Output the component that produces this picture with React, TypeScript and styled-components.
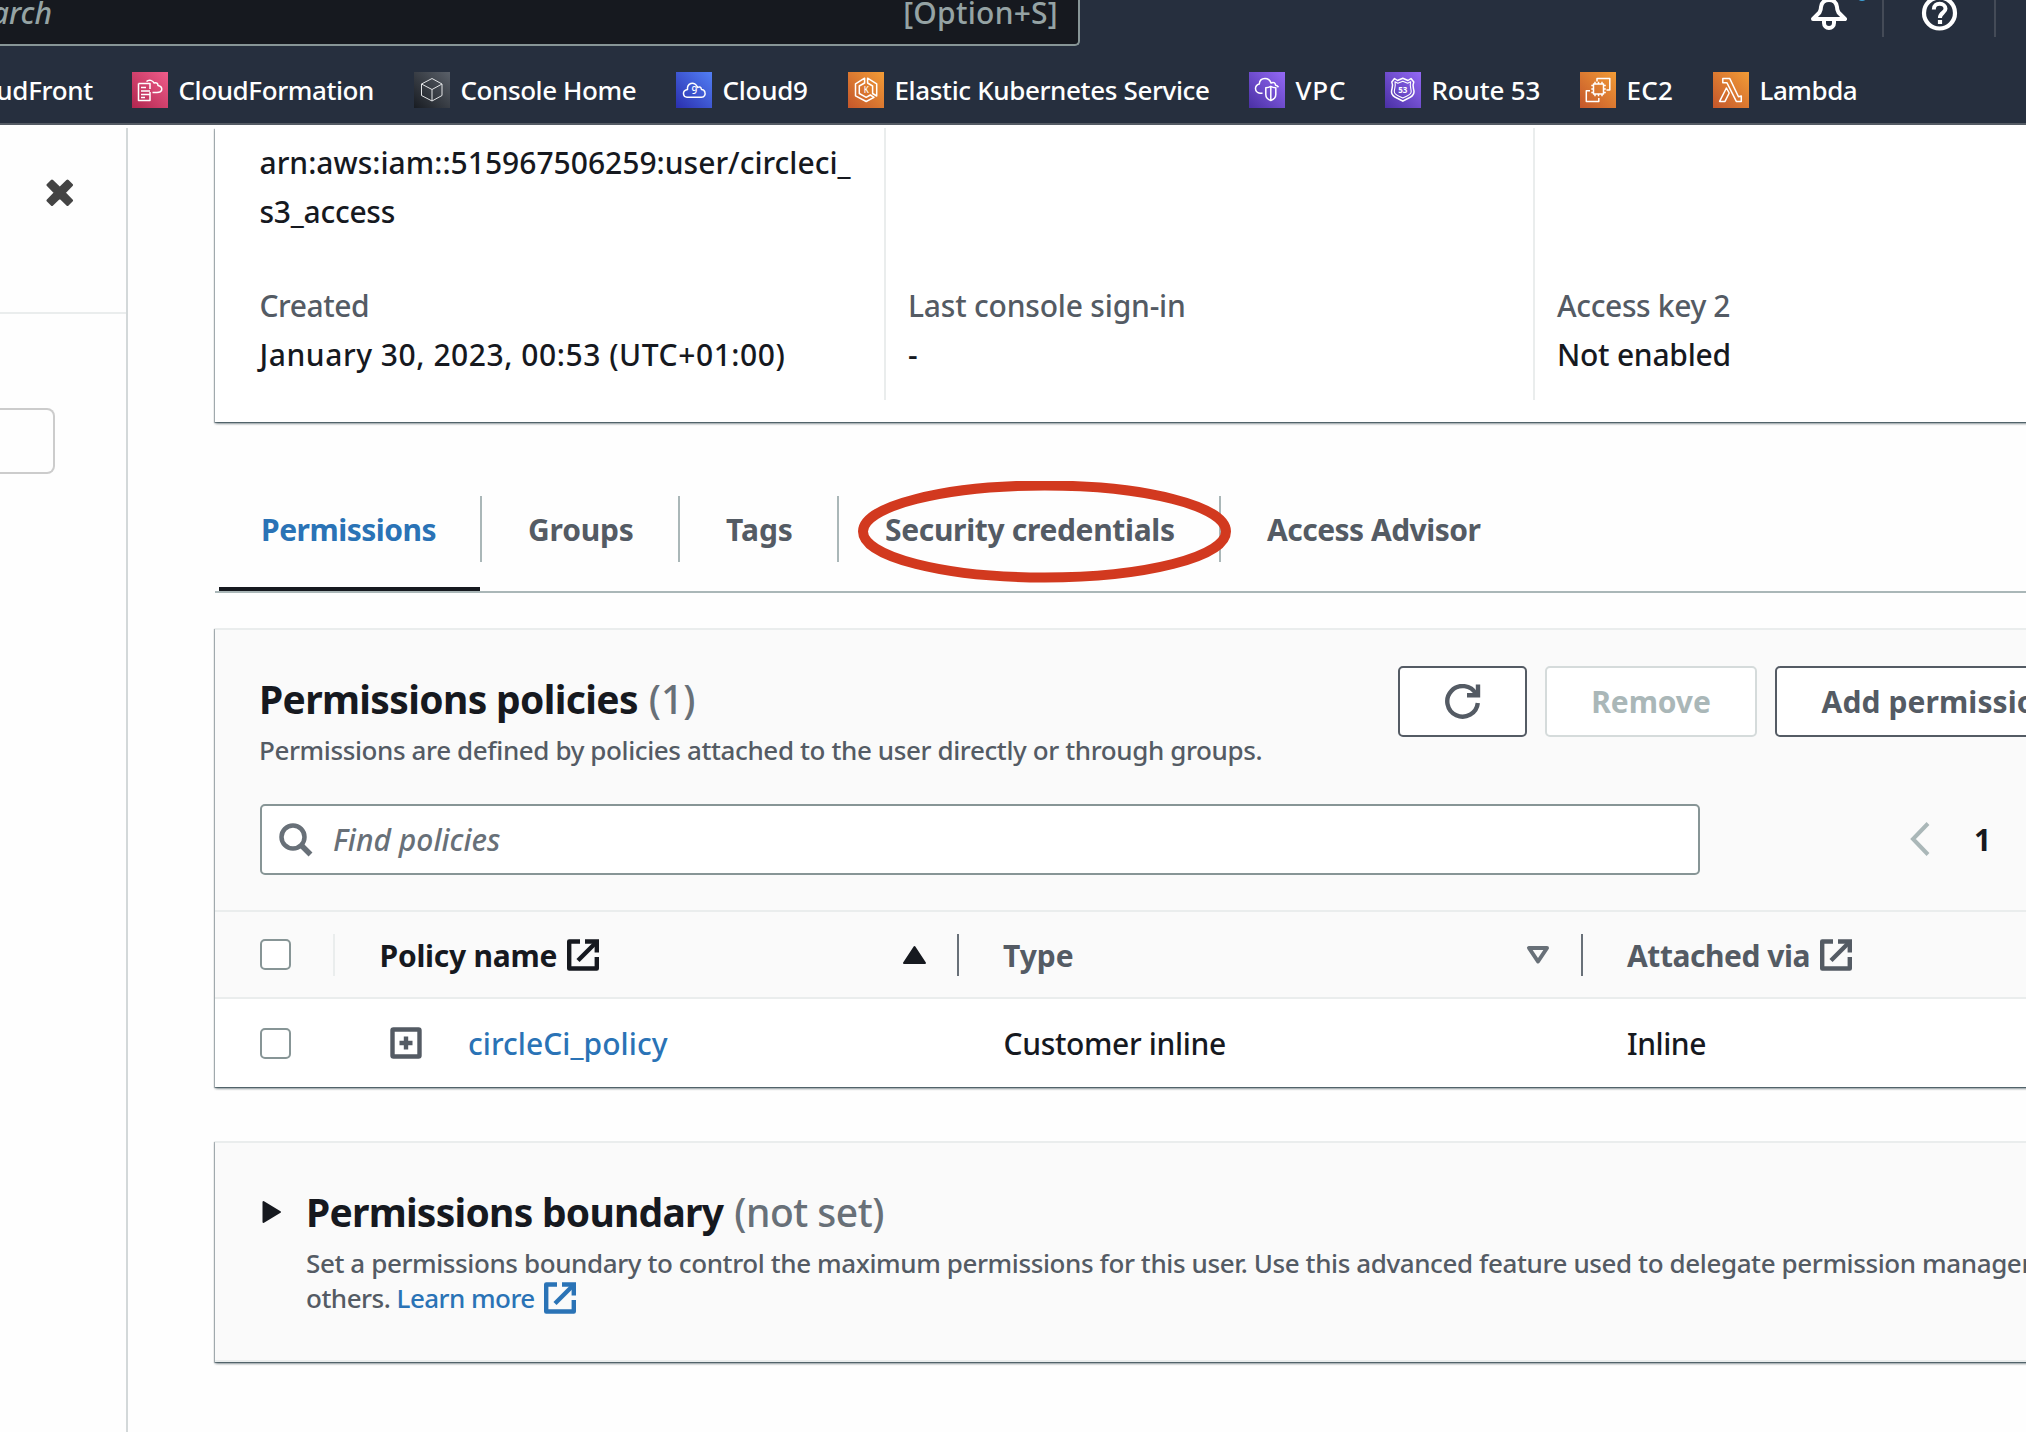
import React from "react";
import styled, { createGlobalStyle, css } from "styled-components";

const Global = createGlobalStyle`
  *, *::before, *::after { box-sizing: border-box; }
  html, body { margin: 0; padding: 0; background: #fefefe; overflow: hidden; }
  button, input { font: inherit; }
`;

const ink = "#16191f";
const slate = "#545b64";
const muted = "#687078";
const link = "#2a73b6";

const Page = styled.div`
  width: 100vw;
  height: 100vh;
  overflow: hidden;
  display: flex;
  flex-direction: column;
  background: #fefefe;
  color: ${ink};
  font-family: "Noto Sans", "Open Sans", sans-serif;
  font-size: 30px;
  font-weight: 500;
  line-height: 49px;
`;

const Label = styled.span<{ $track?: number }>`
  white-space: nowrap;
  letter-spacing: ${(p) => p.$track ?? 0}px;
`;

/* ---------- header ---------- */

const Header = styled.header`
  flex: none;
  height: 125px;
  background: #262f3e;
  border-bottom: 2px solid #545b64;
  overflow: hidden;
`;

const TopBar = styled.div`
  display: flex;
  justify-content: space-between;
  height: 55px;
`;

const SearchBox = styled.div`
  display: flex;
  justify-content: space-between;
  width: 1080px;
  height: 46px;
  padding-right: 20px;
  background: #16191f;
  border-right: 2px solid #879596;
  border-bottom: 2px solid #879596;
  border-bottom-right-radius: 5px;
  color: #95a3a4;
  line-height: 26px;
`;

const SearchHint = styled.div`
  display: flex;
  justify-content: flex-end;
  width: 52px;
  font-style: italic;
`;

const Tools = styled.div`
  display: flex;
  width: 216px;
  height: 37px;
`;

const Tool = styled.div<{ $w: number }>`
  display: flex;
  flex: none;
  width: ${(p) => p.$w}px;
  height: 37px;
  border-right: 2px solid #444b57;
  svg { display: block; }
`;

const Favorites = styled.nav`
  display: grid;
  grid-template-columns: 282px 262px 172px 401px 136px 195px 133px 200px;
  align-items: center;
  height: 70px;
  padding-left: 132px;
  color: #fff;
  font-size: 26px;
  font-weight: 500;
  line-height: 36px;
  position: relative;
`;

const Favorite = styled.div`
  display: flex;
  align-items: center;
  gap: 10.5px;
`;

const ClippedFavorite = styled.div`
  position: absolute;
  right: calc(100% - 93px);
  top: 17px;
`;

const Tile = styled.span<{ $from: string; $to: string }>`
  display: block;
  flex: none;
  width: 36px;
  height: 36px;
  background: linear-gradient(45deg, ${(p) => p.$from}, ${(p) => p.$to});
  svg {
    display: block;
    fill: none;
    stroke: #fff;
    stroke-width: 1.5;
    stroke-linejoin: round;
  }
  text {
    fill: #fff;
    stroke: none;
    text-anchor: middle;
    font-family: "Noto Sans", sans-serif;
  }
`;

/* ---------- body ---------- */

const Body = styled.div`
  display: flex;
  flex: 1;
  min-height: 0;
  padding-top: 3px;
`;

const Sidebar = styled.aside`
  flex: none;
  width: 128px;
  border-right: 2px solid #d3d8d9;
`;

const SidebarHead = styled.div`
  height: 186px;
  padding: 51px 0 0 46px;
  border-bottom: 2px solid #eaeded;
  svg { display: block; }
`;

const SidebarInput = styled.div`
  width: 55px;
  height: 66px;
  margin-top: 94px;
  border: 2px solid #cccccc;
  border-left: 0;
  border-radius: 0 8px 8px 0;
`;

const Main = styled.main`
  flex: none;
  width: 2200px;
  padding-left: 87px;
`;

const shadow = css`
  box-shadow: 0 2px 2px 0 rgba(0, 28, 36, 0.3), 2px 2px 2px 0 rgba(0, 28, 36, 0.15),
    -1px 1px 1px 0 rgba(0, 28, 36, 0.3), 0 1px 0 0 rgba(0, 28, 36, 0.25);
`;

const Summary = styled.section`
  display: grid;
  grid-template-columns: 669px 649px 1fr;
  height: 294px;
  padding-bottom: 22px;
  background: #fff;
  ${shadow}
  clip-path: inset(0 0 -6px -6px);
`;

const SummaryColumn = styled.div<{ $first?: boolean }>`
  display: flex;
  flex-direction: column;
  justify-content: flex-end;
  padding: 0 0 21px ${(p) => (p.$first ? 44.5 : 22)}px;
  border-left: ${(p) => (p.$first ? "0" : "2px solid #eaeded")};
`;

const Arn = styled.div`
  display: flex;
  flex-direction: column;
  margin-bottom: 45px;
`;

const Term = styled.div`
  color: ${slate};
  height: 49px;
`;

const Value = styled.div`
  height: 49px;
`;

/* ---------- tabs ---------- */

const Tabs = styled.div`
  display: flex;
  height: 171px;
  padding: 74px 0 0 4px;
  border-bottom: 2px solid #aab7b8;
`;

const Tab = styled.div<{ $w: number; $pad?: number; $active?: boolean; $last?: boolean }>`
  position: relative;
  display: flex;
  flex: none;
  width: ${(p) => p.$w}px;
  height: 95px;
  padding: 9px 0 0 ${(p) => p.$pad ?? 48}px;
  color: ${(p) => (p.$active ? link : slate)};
  font-weight: 700;
  border-bottom: 4px solid ${(p) => (p.$active ? ink : "transparent")};
  &::after {
    content: "";
    display: ${(p) => (p.$last ? "none" : "block")};
    position: absolute;
    top: 0;
    right: -2px;
    width: 2px;
    height: 66px;
    background: #aab7b8;
  }
`;

const Ring = styled.div`
  position: absolute;
  z-index: 2;
  left: 21px;
  top: -15px;
  svg { display: block; }
`;

/* ---------- panels ---------- */

const Panel = styled.section<{ $h: number; $gap: number }>`
  height: ${(p) => p.$h}px;
  margin-top: ${(p) => p.$gap}px;
  background: #fafafa;
  border-top: 2px solid #eaeded;
  ${shadow}
`;

const PanelHead = styled.div`
  display: flex;
  justify-content: space-between;
  width: 1811px;
  height: 174px;
  padding: 36px 0 0 44px;
`;

const Heading = styled.h2`
  margin: 0;
  display: flex;
  gap: 11px;
  font-size: 39px;
  font-weight: 700;
  line-height: 46px;
`;

const Count = styled(Label)`
  color: ${muted};
  font-weight: 500;
`;

const TitleBlock = styled.div`
  padding-top: 10px;
`;

const Description = styled.p`
  margin: 11px 0 0;
  color: ${slate};
  font-size: 26px;
  line-height: 35px;
`;

const Actions = styled.div`
  display: flex;
  gap: 18px;
  width: 628px;
`;

const Button = styled.button<{ $w: number; $disabled?: boolean }>`
  display: flex;
  flex: none;
  align-items: center;
  justify-content: center;
  width: ${(p) => p.$w}px;
  height: 71px;
  padding: 0;
  background: #fff;
  border: 2px solid ${(p) => (p.$disabled ? "#d5dbdb" : slate)};
  border-radius: 5px;
  color: ${(p) => (p.$disabled ? "#aab7b8" : slate)};
  font-weight: 700;
`;

const FilterRow = styled.div`
  display: flex;
  align-items: center;
  width: 1811px;
  height: 71px;
  padding-left: 45px;
`;

const Filter = styled.div`
  display: flex;
  align-items: center;
  width: 1440px;
  height: 71px;
  padding-left: 17px;
  gap: 20px;
  background: #fff;
  border: 2px solid #879596;
  border-radius: 5px;
  color: ${muted};
  font-style: italic;
`;

const Pager = styled.div`
  display: flex;
  align-items: center;
  gap: 42px;
  margin-left: 208px;
  font-weight: 700;
  svg { display: block; margin-bottom: 2px; }
`;

/* ---------- table ---------- */

const Row = styled.div<{ $head?: boolean }>`
  display: grid;
  grid-template-columns: 120px 624px 624px 1fr;
  height: ${(p) => (p.$head ? 89 : 88)}px;
  margin-top: ${(p) => (p.$head ? 35 : 0)}px;
  border-top: ${(p) => (p.$head ? "2px solid #eaeded" : "0")};
  border-bottom: ${(p) => (p.$head ? "2px solid #eaeded" : "0")};
  background: ${(p) => (p.$head ? "transparent" : "#fff")};
  font-weight: ${(p) => (p.$head ? 700 : 500)};
`;

const Cell = styled.div<{ $color?: string; $pad?: number }>`
  display: flex;
  align-items: center;
  padding-left: ${(p) => p.$pad ?? 44}px;
  color: ${(p) => p.$color ?? ink};
`;

const ColumnTitle = styled(Label)`
  padding-top: 2px;
`;

const Divider = styled.span<{ $color: string }>`
  width: 2px;
  height: 42px;
  margin-left: auto;
  background: ${(p) => p.$color};
`;

const Sort = styled.span<{ $gap: number }>`
  margin-left: auto;
  margin-right: ${(p) => p.$gap}px;
  & + span { margin-left: 0; }
  svg { display: block; }
`;

const Checkbox = styled.span`
  width: 31px;
  height: 31px;
  background: #fff;
  border: 2px solid #879596;
  border-radius: 5px;
`;

const Expander = styled.span`
  margin: 0 46px 0 11px;
  svg { display: block; }
`;

const Link = styled(Label)`
  color: ${link};
`;

const IconAfter = styled.span`
  margin-left: 10px;
  svg { display: block; }
`;

/* ---------- boundary ---------- */

const Boundary = styled.div`
  display: flex;
  height: 219px;
  padding: 46px 0 0 47px;
  border-bottom: 2px solid #eaeded;
`;

const Caret = styled.span`
  width: 44px;
  padding-top: 11px;
  svg { display: block; }
`;

const Line = styled.span`
  display: flex;
  align-items: center;
  height: 35px;
  gap: 9px;
  svg { margin-bottom: 2px; }
`;

/* ---------- icons ---------- */

const ExternalIcon = ({ color }: { color: string }) => (
  <svg width="32" height="32" viewBox="0 0 32 32" fill="none" stroke={color} strokeWidth="4.4">
    <path d="M13 2.5H2.2V29.5H29.8V18" strokeLinejoin="round" />
    <path d="M18 2.5H29.8V13.5" />
    <path d="M29 3.5L11 21.5" />
  </svg>
);

const art: Record<string, React.ReactNode> = {
  formation: (
    <>
      <path d="M6.5 11.5H18V17M18 20V28.5H6.5V11.5" />
      <path d="M9 15.5H14M9 19H18M9 22.5H18M9 25.5H13M14.5 9.5C17 7 21 8.5 22 11C24.5 10 26 11.5 26 13.5C29 14 30 16 29.7 18C29 20.5 27 20.5 25 20.5H20.5" />
    </>
  ),
  home: (
    <path
      strokeWidth="1"
      stroke="#e2e4e6"
      d="M18 6.5L28 12V23.5L18 29L7.5 23.5V12ZM7.5 12L18 17.5L28 12M18 17.5V29"
    />
  ),
  cloud9: (
    <>
      <path d="M11 25.2H25.5C28.5 25 29.5 22.5 29 20.5C28.5 18 26.5 17.5 25.5 17.5C25 14.5 23 14.5 21.5 15.5C20.5 12 17.5 10.5 14.8 11.5C12 12.5 11.3 15.5 11.5 17.5C9 18 7.3 19.5 7.5 22C7.8 24 9.5 25.2 11 25.2Z" />
      <text x="18.3" y="22" fontSize="10">9</text>
    </>
  ),
  eks: (
    <>
      <path d="M16.6 6.2L7.5 11.8V23.8L18.2 29.5L26 25.3L22.3 23L18.2 25.3L11.3 21.5V14L16.6 11Z" />
      <path d="M19.6 6.2L28.7 11.8V24L24.6 21.5V14L19.6 11Z" />
      <text x="18.4" y="21" fontSize="8">K</text>
    </>
  ),
  vpc: (
    <>
      <path d="M13.5 21.2H11C8.5 21 6.5 19 6.5 16.5C6.5 14 8.5 12.5 10.3 12C10.5 8.5 13 6.5 16 6.5C19 6.5 21 8 22 11C24.5 9.5 26.3 11 26.6 13.2C28 13.5 29 14.5 29.5 15.2" />
      <path d="M21.8 14.3C23.5 15.3 25 15.6 26.8 15.7V22.5C26.8 25.5 24.5 27.5 21.8 28.6C19 27.5 16.8 25.5 16.8 22.5V15.7C18.6 15.6 20 15.3 21.8 14.3ZM21.8 15V28" />
    </>
  ),
  route53: (
    <>
      <path d="M9.5 6.5L12.5 8.5L17.8 6.2L23 8.5L26 6.5L28.8 10C26.8 14 29 16.5 29 20C29 25 23.5 25.5 17.8 29.2C12 25.5 6.5 25 6.5 20C6.5 16.5 8.8 14 6.8 10Z" />
      <path
        strokeWidth="1.1"
        d="M10 9.8L12.8 11.2L17.8 9.3L22.7 11.2L25.6 9.8C24.5 14 26.2 16.5 26.2 19.6C26.2 23.5 22 23.5 17.8 26C13.5 23.5 9.3 23.5 9.3 19.6C9.3 16.5 11 14 10 9.8Z"
      />
      <text x="17.8" y="20.8" fontSize="8" fontWeight="700">53</text>
    </>
  ),
  ec2: (
    <>
      <path d="M17 9.5V6.5H29.8V18H26.5M10 18.8H6.3V29.5H18.8V26" />
      <rect x="13.5" y="12" width="10" height="10" />
      <path d="M15 9.8V12M18.5 9.8V12M22 9.8V12M15 22V24.3M18.5 22V24.3M22 22V24.3M11.3 13.5H13.5M11.3 17H13.5M11.3 20.5H13.5M23.5 13.5H25.8M23.5 17H25.8M23.5 20.5H25.8" />
    </>
  ),
  lambda: (
    <path d="M9.8 6.6H16.8L25.5 24.8L28.3 24V29.4H23.3L14 10.8H9.8ZM13.4 16L6.6 29.4H12L16.2 21Z" />
  ),
};

const favorites = [
  { name: "CloudFormation", icon: "formation", from: "#b0264f", to: "#f05c8a", track: -0.4 },
  { name: "Console Home", icon: "home", from: "#181c22", to: "#5a6069", track: -0.42 },
  { name: "Cloud9", icon: "cloud9", from: "#2a2fae", to: "#527ff5", track: -0.25 },
  { name: "Elastic Kubernetes Service", icon: "eks", from: "#c4562b", to: "#f29c36", track: -0.36 },
  { name: "VPC", icon: "vpc", from: "#4a30a4", to: "#9469f5", track: 0.8 },
  { name: "Route 53", icon: "route53", from: "#4a30a4", to: "#9469f5", track: -0.15 },
  { name: "EC2", icon: "ec2", from: "#c4562b", to: "#f29c36", track: 0.3 },
  { name: "Lambda", icon: "lambda", from: "#c4562b", to: "#f29c36", track: -0.45 },
];

export default function App() {
  return (
    <Page>
      <Global />
      <Header>
        <TopBar>
          <SearchBox>
            <SearchHint>
              <Label>Search</Label>
            </SearchHint>
            <Label $track={0.25}>[Option+S]</Label>
          </SearchBox>
          <Tools>
            <Tool $w={74}>
              <svg width="60" height="37" viewBox="1810 0 60 37" fill="none" stroke="#fff" strokeWidth="4">
                <path
                  strokeLinejoin="round"
                  d="M1813 19L1819.500 12.500Q1821 10 1821 7Q1822 0 1829 0Q1836 0 1837 7Q1837 10 1838.500 12.500L1845 19Z"
                />
                <path d="M1824 20V23A5 5 0 0 0 1834 23V20" />
                <circle cx="1862" cy="-5" r="6" fill="#3fa3d8" stroke="none" />
              </svg>
            </Tool>
            <Tool $w={112}>
              <svg width="80" height="37" viewBox="1884 0 80 37" fill="none" stroke="#fff">
                <circle cx="1939.500" cy="13" r="15.500" strokeWidth="4.200" />
                <path
                  strokeWidth="4"
                  d="M1933.800 9.500C1933.800 5 1936.500 3.800 1939.700 3.800C1943 3.800 1945.500 5.800 1945.500 8.800C1945.500 12.800 1939.900 12.500 1939.900 18"
                />
                <rect x="1937.900" y="20" width="4.200" height="4" fill="#fff" stroke="none" />
              </svg>
            </Tool>
          </Tools>
        </TopBar>
        <Favorites>
          <ClippedFavorite>
            <Label $track={-0.3}>CloudFront</Label>
          </ClippedFavorite>
          {favorites.map((f) => (
            <Favorite key={f.name}>
              <Tile $from={f.from} $to={f.to}>
                <svg width="36" height="36" viewBox="0 0 36 36">{art[f.icon]}</svg>
              </Tile>
              <Label $track={f.track}>{f.name}</Label>
            </Favorite>
          ))}
        </Favorites>
      </Header>

      <Body>
        <Sidebar>
          <SidebarHead>
            <svg
              width="28"
              height="28"
              viewBox="0 0 28 28"
              fill="#444"
              stroke="#444"
              strokeWidth="3"
              strokeLinejoin="round"
            >
              <path d="M6 2L13.800 9.500L21.500 2L25.500 6L18 13.800L25.500 21.500L21.500 25.500L13.800 18L6 25.500L2 21.500L9.500 13.800L2 6Z" />
            </svg>
          </SidebarHead>
          <SidebarInput />
        </Sidebar>

        <Main>
          <Summary>
            <SummaryColumn $first>
              <Arn>
                <Label $track={0.01}>arn:aws:iam::515967506259:user/circleci_</Label>
                <Label $track={-0.25}>s3_access</Label>
              </Arn>
              <Term><Label $track={-0.45}>Created</Label></Term>
              <Value><Label $track={0.55}>January 30, 2023, 00:53 (UTC+01:00)</Label></Value>
            </SummaryColumn>
            <SummaryColumn>
              <Term><Label $track={-0.2}>Last console sign-in</Label></Term>
              <Value>-</Value>
            </SummaryColumn>
            <SummaryColumn>
              <Term><Label $track={-0.36}>Access key 2</Label></Term>
              <Value><Label $track={-0.25}>Not enabled</Label></Value>
            </SummaryColumn>
          </Summary>

          <Tabs>
            <Tab $w={261} $pad={42} $active><Label $track={-0.5}>Permissions</Label></Tab>
            <Tab $w={198}><Label $track={-0.2}>Groups</Label></Tab>
            <Tab $w={159}><Label>Tags</Label></Tab>
            <Tab $w={382}>
              <Label $track={-0.33}>Security credentials</Label>
              <Ring>
                <svg width="374" height="102" viewBox="0 0 374 102" fill="none">
                  <ellipse cx="186.500" cy="50.500" rx="181.500" ry="46" stroke="#d2391f" strokeWidth="10" />
                </svg>
              </Ring>
            </Tab>
            <Tab $w={307} $last><Label $track={-0.52}>Access Advisor</Label></Tab>
          </Tabs>

          <Panel $h={459} $gap={35}>
            <PanelHead>
              <TitleBlock>
                <Heading>
                  <Label $track={-0.65}>Permissions policies</Label>
                  <Count>(1)</Count>
                </Heading>
                <Description>
                  <Label $track={-0.39}>
                    Permissions are defined by policies attached to the user directly or through groups.
                  </Label>
                </Description>
              </TitleBlock>
              <Actions>
                <Button $w={129}>
                  <svg width="36" height="36" viewBox="0 0 36 36" fill="none" stroke={slate} strokeWidth="4.400">
                    <path d="M32.800 19A15.300 15.300 0 1 1 31 10" />
                    <path d="M33 0.500V11.300H22" />
                  </svg>
                </Button>
                <Button $w={212} $disabled><Label $track={-0.1}>Remove</Label></Button>
                <Button $w={342}><Label $track={0.1}>Add permissions</Label></Button>
              </Actions>
            </PanelHead>
            <FilterRow>
              <Filter>
                <svg width="34" height="34" viewBox="0 0 34 34" fill="none" stroke={muted}>
                  <circle cx="14" cy="14" r="11.500" strokeWidth="4.500" />
                  <path d="M22 22L31.500 31.500" strokeWidth="5.500" />
                </svg>
                <Label>Find policies</Label>
              </Filter>
              <Pager>
                <svg width="24" height="36" viewBox="0 0 24 36" fill="none" stroke="#aab7b8" strokeWidth="4">
                  <path d="M20 2.500L5 18L20 33.500" />
                </svg>
                <Label>1</Label>
              </Pager>
            </FilterRow>
            <Row $head>
              <Cell $pad={45}>
                <Checkbox />
                <Divider $color="#eaeded" />
              </Cell>
              <Cell $pad={44.5}>
                <ColumnTitle $track={-0.25}>Policy name</ColumnTitle>
                <IconAfter><ExternalIcon color={ink} /></IconAfter>
                <Sort $gap={30}>
                  <svg width="25" height="20" viewBox="0 0 25 20">
                    <path d="M12.500 2L23 18H2Z" fill={ink} stroke={ink} strokeWidth="2" strokeLinejoin="round" />
                  </svg>
                </Sort>
                <Divider $color={muted} />
              </Cell>
              <Cell $color={slate}>
                <ColumnTitle>Type</ColumnTitle>
                <Sort $gap={31}>
                  <svg width="24" height="20" viewBox="0 0 24 20">
                    <path d="M3 3H21L12 16.500Z" fill="none" stroke={muted} strokeWidth="4" strokeLinejoin="round" />
                  </svg>
                </Sort>
                <Divider $color={muted} />
              </Cell>
              <Cell $color={slate}>
                <ColumnTitle $track={-0.45}>Attached via</ColumnTitle>
                <IconAfter><ExternalIcon color={slate} /></IconAfter>
              </Cell>
            </Row>
            <Row>
              <Cell $pad={45}><Checkbox /></Cell>
              <Cell>
                <Expander>
                  <svg width="32" height="32" viewBox="0 0 32 32" fill="none" stroke={slate} strokeWidth="4.400">
                    <rect x="2.500" y="2.500" width="27" height="27" rx="1" />
                    <path d="M16 9.500V22.500M9.500 16H22.500" />
                  </svg>
                </Expander>
                <Link $track={0.05}>circleCi_policy</Link>
              </Cell>
              <Cell $pad={44.5}><Label $track={-0.35}>Customer inline</Label></Cell>
              <Cell><Label $track={-0.45}>Inline</Label></Cell>
            </Row>
          </Panel>

          <Panel $h={221} $gap={54}>
            <Boundary>
              <Caret>
                <svg width="20" height="24" viewBox="0 0 20 24">
                  <path d="M1.500 2V22L18 12Z" fill={ink} stroke={ink} strokeWidth="2" strokeLinejoin="round" />
                </svg>
              </Caret>
              <div>
                <Heading>
                  <Label $track={-0.75}>Permissions boundary</Label>
                  <Count $track={-0.5}>(not set)</Count>
                </Heading>
                <Description>
                  <Line>
                    <Label $track={-0.4}>
                      Set a permissions boundary to control the maximum permissions for this user. Use this advanced
                      feature used to delegate permission management to
                    </Label>
                  </Line>
                  <Line>
                    <Label $track={-0.5}>
                      others. <Link $track={-0.55}>Learn more</Link>
                    </Label>
                    <ExternalIcon color={link} />
                  </Line>
                </Description>
              </div>
            </Boundary>
          </Panel>
        </Main>
      </Body>
    </Page>
  );
}
